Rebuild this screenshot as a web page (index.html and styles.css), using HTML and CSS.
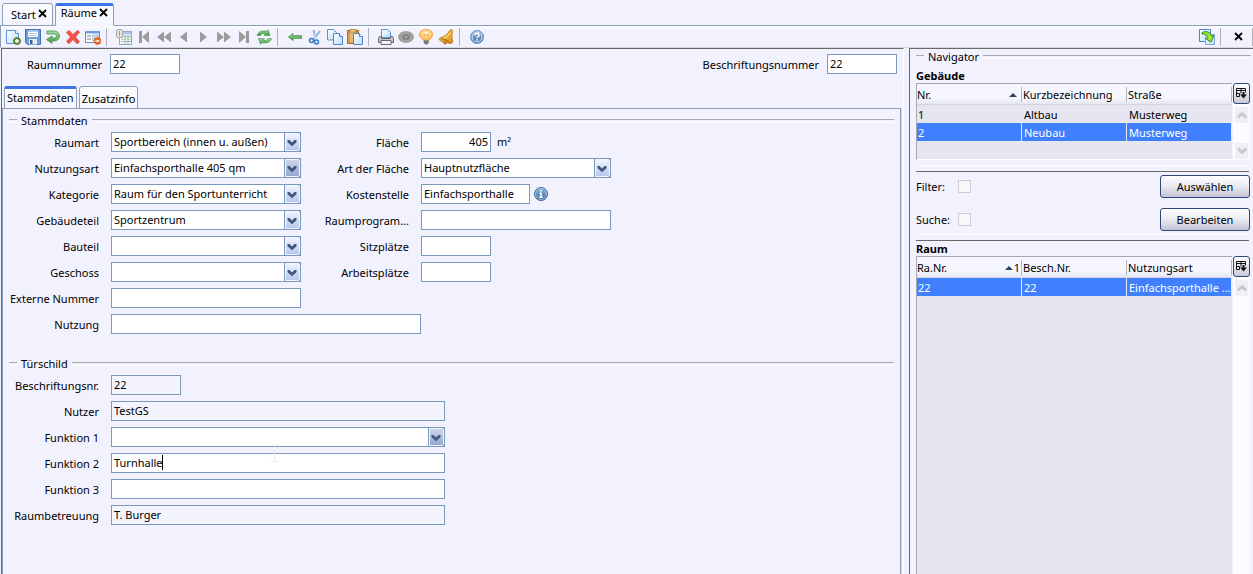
FILE: index.html
```html
<!DOCTYPE html>
<html lang="de">
<head>
<meta charset="utf-8">
<title>Räume</title>
<link rel="stylesheet" href="styles.css">
</head>
<body>
<svg class="defs" aria-hidden="true">
  <defs>
    <linearGradient id="blueSheet" x1="0" y1="0" x2="1" y2="1"><stop offset="0" stop-color="#ffffff"/><stop offset="1" stop-color="#b9dcf8"/></linearGradient>
    <linearGradient id="green" x1="0" y1="0" x2="0" y2="1"><stop offset="0" stop-color="#a5dca0"/><stop offset="1" stop-color="#3c9a3c"/></linearGradient>
    <linearGradient id="gold" x1="0" y1="0" x2="1" y2="1"><stop offset="0" stop-color="#ffe27a"/><stop offset="1" stop-color="#d98a10"/></linearGradient>
    <linearGradient id="orb" x1="0" y1="0" x2="0" y2="1"><stop offset="0" stop-color="#8db4dc"/><stop offset="1" stop-color="#3c6ea8"/></linearGradient>
    <radialGradient id="bulb" cx=".5" cy=".4" r=".6"><stop offset="0" stop-color="#fffbe0"/><stop offset="1" stop-color="#fbb040"/></radialGradient>
    <symbol id="chevron" viewBox="0 0 10 8"><path d="M.5 1v2.200L5 7.200l4.500-4V1H7.500L5 3.500 2.500 1z" fill="#41597f"/></symbol>
    <symbol id="columns" viewBox="0 0 11 11"><path d="M3.500 8.500h-3v-8h9v4M.5 2.500h9M3.500 5.500h-3M5 .5v5M3.500 5.500v3" fill="none" stroke="#111"/><path d="M4 6.500h7L7.500 10.500z" fill="#111"/><path d="M6.500 4h2v3h-2z" fill="#111"/></symbol>
    <symbol id="close" viewBox="0 0 9 9"><path d="M1 1l7 7M8 1L1 8" stroke="#000" stroke-width="1.800" fill="none"/></symbol>
  </defs>
</svg>
<div class="app">
  <nav class="tabs main-tabs">
    <div class="tab">Start<button class="tab-close" aria-label="Start schließen"><svg width="9" height="9"><use href="#close"/></svg></button></div>
    <div class="tab active">Räume<button class="tab-close" aria-label="Räume schließen"><svg width="9" height="9"><use href="#close"/></svg></button></div>
  </nav>

  <div class="toolbar">
    <button class="tool" aria-label="Neu"><svg viewBox="0 0 16 16"><path d="M1.500 1.500h9l3 3v10h-12z" fill="url(#blueSheet)" stroke="#5b93d6"/><path d="M10.500 1.500v3h3" fill="#fff" stroke="#5b93d6"/><circle cx="12" cy="12" r="3.500" fill="#6b9a3f" stroke="#4a7a2a"/><path d="M12 10v4M10 12h4" stroke="#fff" stroke-width="1.300"/></svg></button>
    <button class="tool" aria-label="Speichern"><svg viewBox="0 0 16 16"><path d="M.5 .5h15v15h-13l-2-2z" fill="#6c9cdc" stroke="#4272b4"/><path d="M3 1h10v7H3z" fill="#fff"/><path d="M3 1h10v2H3z" fill="#a5ccf3"/><path d="M4 4.500h8M4 6.500h8" stroke="#b9c8d8"/><path d="M4 10h8v5.500H4z" fill="#e8edf3"/><path d="M5 11h2.500v4H5z" fill="#3e6292"/></svg></button>
    <button class="tool" aria-label="Rückgängig"><svg viewBox="0 0 16 16"><path d="M2 2h7.500a5 5 0 0 1 0 10H7v2.500L1.500 10.500 7 7v2h2.500a2 2 0 0 0 0-4H2z" fill="url(#green)" stroke="#4d9450" stroke-width=".8"/></svg></button>
    <button class="tool" aria-label="Löschen"><svg viewBox="0 0 16 16"><path d="M1.500 3.500L4 1.500 8 5.500 12.500 1.500 14.500 3 10.500 8 14.500 13 12 14.800 8 10.500 4 14.800 1.500 12.500 5.500 8z" fill="#f45348" stroke="#de3b35" stroke-width=".7"/></svg></button>
    <button class="tool" aria-label="Formular schließen"><svg viewBox="0 0 16 16"><path d="M.5 2.500h14v11H.5z" fill="#fff" stroke="#6389bc"/><path d="M1 2h13v2.500H1z" fill="#6fa0dc"/><path d="M2 7h4M2 10h4" stroke="#777" stroke-width="1.200"/><path d="M7.500 6h6v2h-6zM7.500 9.500h3v2h-3z" fill="#dce8f5" stroke="#8ba6c4" stroke-width=".7"/><circle cx="12.500" cy="12" r="3.400" fill="#ee6a20" stroke="#c84d10" stroke-width=".6"/><path d="M10.500 12h4" stroke="#fff" stroke-width="1.400"/></svg></button>
    <span class="sep"></span>
    <button class="tool" aria-label="Tabelle"><svg viewBox="0 0 16 16"><path d="M3.500 2.500h12v13h-12z" fill="#f4f8fc" stroke="#8aa9cc"/><path d="M4 3h11v2.500H4z" fill="#a9c7e8"/><path d="M5 7.500h10M5 10h10M5 12.500h10M9 6v9M12 6v9" stroke="#93b39d" stroke-width=".8"/><rect x=".5" y=".5" width="6" height="8" rx="1.500" fill="#e4e4e4" stroke="#aaa"/><path d="M3.500 2v5" stroke="#999"/></svg></button>
    <button class="tool gray" aria-label="Erster"><svg viewBox="0 0 16 16"><path d="M3 2h3v12H3zM13 2v12L6 8z"/></svg></button>
    <button class="tool gray" aria-label="Zurück blättern"><svg viewBox="0 0 16 16"><path d="M8 2.500v11L1 8zM15 2.500v11L8 8z"/></svg></button>
    <button class="tool gray" aria-label="Voriger"><svg viewBox="0 0 16 16"><path d="M11 2.500v11L4 8z"/></svg></button>
    <button class="tool gray" aria-label="Nächster"><svg viewBox="0 0 16 16"><path d="M4 2.500v11L11 8z"/></svg></button>
    <button class="tool gray" aria-label="Vor blättern"><svg viewBox="0 0 16 16"><path d="M1 2.500v11L8 8zM8 2.500v11L15 8z"/></svg></button>
    <button class="tool gray" aria-label="Letzter"><svg viewBox="0 0 16 16"><path d="M10 2h3v12h-3zM3 2v12l7-6z"/></svg></button>
    <button class="tool" aria-label="Aktualisieren"><svg viewBox="0 0 16 16"><path d="M1 6.500C2 3 6 1 10.500 2.500L12 .8l2 5.700-6-.2 1.500-1.500C7 4 5 4.500 4.500 6.500z" fill="url(#green)" stroke="#4a944c" stroke-width=".7"/><path d="M15.500 9.500c-1 3.500-5 5.500-9.500 4L4.500 15.200l-2-5.700 6 .2L7 11.200c2.500.8 4.500.3 5-1.700z" fill="url(#green)" stroke="#4a944c" stroke-width=".7"/></svg></button>
    <span class="sep"></span>
    <button class="tool" aria-label="Zurück"><svg viewBox="0 0 16 16"><path d="M1.500 8L6 4.500v2.200h8.500v2.600H6v2.200z" fill="url(#green)" stroke="#4a9450" stroke-width=".9"/></svg></button>
    <button class="tool" aria-label="Ausschneiden"><svg viewBox="0 0 16 16"><path d="M6.500 1L8.500 10M13 2L6.500 10.500" stroke="#8bb5de" stroke-width="2"/><path d="M7.500 5l1 5" stroke="#d7e8f8"/><circle cx="4.500" cy="11.500" r="2" fill="none" stroke="#3f7dc2" stroke-width="1.600"/><circle cx="9.500" cy="13" r="2" fill="none" stroke="#3f7dc2" stroke-width="1.600"/></svg></button>
    <button class="tool" aria-label="Kopieren"><svg viewBox="0 0 16 16"><path d="M.5.5h6l3 3v7.500h-9z" fill="url(#blueSheet)" stroke="#5b93d6"/><path d="M6.500 4.500h6l3 3v8h-9z" fill="url(#blueSheet)" stroke="#4c84cc"/><path d="M12.500 4.500v3h3" fill="#fff" stroke="#4c84cc"/></svg></button>
    <button class="tool" aria-label="Einfügen"><svg viewBox="0 0 16 16"><path d="M.5 1.500h11v13H.5z" fill="#d69a50" stroke="#a86a24"/><path d="M3 3h6v10H3z" fill="#e9b878"/><rect x="3" y=".5" width="6" height="2.500" fill="#f4d777" stroke="#99762a" stroke-width=".7"/><path d="M6.500 4.500h6l3 3v8h-9z" fill="url(#blueSheet)" stroke="#4c84cc"/><path d="M12.500 4.500v3h3" fill="#fff" stroke="#4c84cc"/></svg></button>
    <span class="sep"></span>
    <button class="tool" aria-label="Drucken"><svg viewBox="0 0 16 16"><path d="M3.500.5h6l3 3v5h-9z" fill="url(#blueSheet)" stroke="#5b93d6"/><path d="M1.500 7.500h2v2h9v-2h2l1 2v4H.5v-4z" fill="#c9c9cc" stroke="#66676b"/><path d="M3 11.500h10v4H3z" fill="#f6f6f8" stroke="#66676b"/></svg></button>
    <button class="tool" aria-label="Vorschau"><svg viewBox="0 0 16 16"><ellipse cx="8" cy="8" rx="8" ry="6" fill="#a3a3a3"/><ellipse cx="8" cy="8" rx="4" ry="3" fill="#858585"/><circle cx="8" cy="8" r="1.300" fill="#a9a9a9"/></svg></button>
    <button class="tool" aria-label="Hinweis"><svg viewBox="0 0 16 16"><path d="M8 .5c4 0 6.500 2.300 6.500 5.200 0 2.600-2.500 3.800-3.500 5.800H5.500C4.500 9.500 1.500 8.300 1.500 5.700 1.500 2.800 4 .5 8 .5z" fill="url(#bulb)" stroke="#eda43c"/><path d="M6 8V5l2 1.500L10 5v3" fill="none" stroke="#eda43c"/><path d="M5.800 11.500h5v2.500l-1.500 1.500H7.200L5.800 14z" fill="#737b82"/></svg></button>
    <button class="tool" aria-label="Erinnerung"><svg viewBox="0 0 16 16"><path d="M12 1.200L14 .8l.5 1.700c-.8 3-.9 6.500.1 9.500.3 1.500-.8 2.700-2.300 2.500L2.500 11.800c-1.500-.6-1.700-2.300-.3-2.900C6 7.800 9.500 5.500 12 1.200z" fill="url(#gold)" stroke="#c58114"/><path d="M2.500 10.200c3-.8 7 .5 9.800 3.800" fill="none" stroke="#9c620c"/><path d="M11.500 4.500C10 7 8 8.500 6 9.300" fill="none" stroke="#fff0a8"/><circle cx="7" cy="13.500" r="1.700" fill="#d28b1c" stroke="#a56a10" stroke-width=".6"/></svg></button>
    <span class="sep"></span>
    <button class="tool" aria-label="Hilfe"><svg viewBox="0 0 16 16"><circle cx="8" cy="8" r="6.500" fill="url(#orb)" stroke="#6c96c6"/><circle cx="8" cy="8" r="5" fill="none" stroke="#dbe9f7"/><path d="M6 6.500c0-2.800 4-2.500 4-.3C10 7.800 8 7.700 8 9.300M8 10.300v1.500" fill="none" stroke="#fff" stroke-width="1.500"/></svg></button>
    <div class="toolbar-end">
      <button class="tool" aria-label="Navigator ablösen"><svg viewBox="0 0 16 16"><path d="M.5.500h11v12H.5z" fill="url(#blueSheet)" stroke="#4c84cc"/><path d="M6.500 5.500h9v10h-9z" fill="url(#blueSheet)" stroke="#7eace0"/><path d="M3 3.500c4-2 8.500-.5 9.500 3.500l2.500-.5-3 6.500-5.500-3.500 2.500-.7C8.500 6.500 6.500 4.500 3 5z" fill="#a5e62c" stroke="#27883a"/></svg></button>
      <span class="sep"></span>
      <button class="tool" aria-label="Schließen"><svg class="small" viewBox="0 0 9 9"><use href="#close"/></svg></button>
      <span class="sep last"></span>
    </div>
  </div>

  <div class="body">
    <main class="editor">
      <div class="head">
        <div class="pair"><label for="raumnr">Raumnummer</label><input class="w-s" id="raumnr" value="22"></div>
        <div class="pair"><label for="beschnr">Beschriftungsnummer</label><input class="w-s" id="beschnr" value="22"></div>
      </div>
      <div class="tabs sub-tabs">
        <button class="tab active">Stammdaten</button>
        <button class="tab">Zusatzinfo</button>
      </div>
      <div class="panel">
        <h2 class="rule">Stammdaten</h2>
        <div class="form">
          <label for="raumart">Raumart</label>
          <div class="combo w-m"><select id="raumart"><option>Sportbereich (innen u. außen)</option></select><span class="arrow"><svg><use href="#chevron"/></svg></span></div>
          <label for="flaeche">Fläche</label>
          <div class="pair"><input class="w-s num" id="flaeche" value="405"><span class="unit">m²</span></div>

          <label for="nutzungsart">Nutzungsart</label>
          <div class="combo w-m"><select id="nutzungsart"><option>Einfachsporthalle 405 qm</option></select><span class="arrow dark"><svg><use href="#chevron"/></svg></span></div>
          <label for="artfl">Art der Fläche</label>
          <div class="combo w-m"><select id="artfl"><option>Hauptnutzfläche</option></select><span class="arrow"><svg><use href="#chevron"/></svg></span></div>

          <label for="kategorie">Kategorie</label>
          <div class="combo w-m"><select id="kategorie"><option>Raum für den Sportunterricht</option></select><span class="arrow"><svg><use href="#chevron"/></svg></span></div>
          <label for="kosten">Kostenstelle</label>
          <div class="pair"><input class="w-k" id="kosten" value="Einfachsporthalle"><button class="info" aria-label="Info"><svg viewBox="0 0 16 16"><circle cx="8" cy="8" r="6.500" fill="url(#orb)" stroke="#41699b"/><circle cx="8" cy="8" r="5.500" fill="none" stroke="#a8c6e6" stroke-width=".8"/><path d="M8 4v1.700M6.500 7.200H8v4M6.300 11.300h3.500" fill="none" stroke="#fff" stroke-width="1.500"/></svg></button></div>

          <label for="gebteil">Gebäudeteil</label>
          <div class="combo w-m"><select id="gebteil"><option>Sportzentrum</option></select><span class="arrow"><svg><use href="#chevron"/></svg></span></div>
          <label for="rprog">Raumprogram...</label>
          <input class="w-m" id="rprog">

          <label for="bauteil">Bauteil</label>
          <div class="combo w-m"><select id="bauteil"><option></option></select><span class="arrow"><svg><use href="#chevron"/></svg></span></div>
          <label for="sitz">Sitzplätze</label>
          <input class="w-s" id="sitz">

          <label for="geschoss">Geschoss</label>
          <div class="combo w-m"><select id="geschoss"><option></option></select><span class="arrow"><svg><use href="#chevron"/></svg></span></div>
          <label for="arbeit">Arbeitsplätze</label>
          <input class="w-s" id="arbeit">

          <label for="extern">Externe Nummer</label>
          <input class="w-m span" id="extern">

          <label for="nutzung">Nutzung</label>
          <input class="w-l span" id="nutzung">
        </div>

        <h2 class="rule second">Türschild</h2>
        <div class="form">
          <label for="tnr">Beschriftungsnr.</label>
          <input class="w-s span" id="tnr" value="22" readonly>
          <label for="nutzer">Nutzer</label>
          <input class="w-xl span" id="nutzer" value="TestGS" readonly>
          <label for="f1">Funktion 1</label>
          <div class="combo w-xl span"><select id="f1"><option></option></select><span class="arrow dark"><svg><use href="#chevron"/></svg></span><svg class="pointer" viewBox="0 0 7 17"><path d="M0 .5h3M4 .5h3M3.500 1v15M0 16.500h7" stroke="#ececf2" fill="none"/></svg></div>
          <label for="f2">Funktion 2</label>
          <div class="combo w-xl span"><input id="f2" value="Turnhalle"><span class="caret"></span></div>
          <label for="f3">Funktion 3</label>
          <input class="w-xl span" id="f3">
          <label for="betr">Raumbetreuung</label>
          <input class="w-xl span" id="betr" value="T. Burger" readonly>
        </div>
      </div>
    </main>

    <aside class="navigator">
      <h2 class="rule">Navigator</h2>
      <h3>Gebäude</h3>
      <div class="list short">
        <div class="cells">
          <table>
            <thead><tr><th><div class="th">Nr.<span class="sort"></span></div></th><th><div class="th">Kurzbezeichnung</div></th><th><div class="th">Straße</div></th></tr></thead>
            <tbody>
              <tr><td>1</td><td>Altbau</td><td>Musterweg</td></tr>
              <tr class="selected"><td>2</td><td>Neubau</td><td>Musterweg</td></tr>
            </tbody>
          </table>
        </div>
        <div class="side">
          <button class="colbtn" aria-label="Spalten"><svg><use href="#columns"/></svg></button>
          <div class="scroll"><span class="sb up"><svg><use href="#chevron"/></svg></span><span class="sb"><svg><use href="#chevron"/></svg></span></div>
        </div>
      </div>
      <div class="split"></div>
      <div class="action"><label for="filter">Filter:</label><input type="checkbox" id="filter"><button class="btn">Auswählen</button></div>
      <div class="action"><label for="suche">Suche:</label><input type="checkbox" id="suche"><button class="btn">Bearbeiten</button></div>
      <div class="split tight"></div>
      <h3>Raum</h3>
      <div class="list fill">
        <div class="cells">
          <table>
            <thead><tr><th><div class="th">Ra.Nr.<span class="sort">1</span></div></th><th><div class="th">Besch.Nr.</div></th><th><div class="th">Nutzungsart</div></th></tr></thead>
            <tbody><tr class="selected"><td>22</td><td>22</td><td>Einfachsporthalle ...</td></tr></tbody>
          </table>
        </div>
        <div class="side">
          <button class="colbtn" aria-label="Spalten"><svg><use href="#columns"/></svg></button>
          <div class="scroll"><span class="sb up"><svg><use href="#chevron"/></svg></span></div>
        </div>
      </div>
    </aside>
  </div>
</div>
</body>
</html>
```
FILE: styles.css
```css
* { box-sizing: border-box; }
body {
  margin: 0;
  background: #f2f2ff;
  color: #000;
  font: 11px/16px "Noto Sans", "Open Sans", sans-serif;
}
button, input, select { font: inherit; color: inherit; margin: 0; }
button { padding: 0; border: 0; background: none; }
svg { display: block; }
h2, h3 { margin: 0; font-size: inherit; }
.defs { position: absolute; width: 0; height: 0; }
.app { display: flex; flex-direction: column; min-height: 100vh; }

/* Tabs */
.tabs { display: flex; gap: 2px; padding-left: 2px; }
.tab {
  display: flex;
  align-items: center;
  gap: 2px;
  height: 23px;
  border: 1px solid #8ca0b8;
  border-radius: 3px 3px 0 0;
  background: linear-gradient(#fdfdff, #f4f4fe);
}
.tab.active { border-top: 3px solid #3d73e6; border-bottom-color: #f2f2ff; }
.main-tabs { padding-top: 3px; box-shadow: inset 0 -1px #8ca0b8; }
.main-tabs .tab { padding: 0 5px 0 8px; }
.main-tabs .active { padding: 0 5px 5px; }
.tab-close { padding-bottom: 2px; }
.sub-tabs { margin-bottom: -1px; }
.sub-tabs .tab { padding: 2px 2px 0; }
.sub-tabs .active { padding: 0 2px 1px; }

/* Toolbar */
.toolbar {
  display: flex;
  align-items: center;
  height: 22px;
  padding-left: 2px;
  border-left: 1px solid #8ca0b8;
  border-bottom: 1px solid #d8d8e4;
  background: linear-gradient(#fbfbff, #f2f2ff 4px);
}
.tool { width: 20px; padding: 0 2px; }
.tool svg { width: 16px; height: 16px; }
.tool .small { width: 9px; height: 9px; margin: 0 auto; }
.gray { fill: #9b9b9b; }
.sep { width: 1px; height: 18px; margin: 0 7px 0 3px; background: #b0b0b8; }
.toolbar-end { display: flex; align-items: center; margin-left: auto; }
.sep.last { margin: 0 0 0 4px; }

/* Body */
.body { display: flex; flex: 1; gap: 5px; }
.editor {
  display: flex;
  flex: 1;
  flex-direction: column;
  min-width: 0;
  border-top: 1px solid #696969;
  border-left: 1px solid #696969;
  border-right: 1px solid #fff;
  margin-left: 1px;
}
.head { display: flex; justify-content: space-between; padding: 5px 6px 12px 25px; }
.pair { display: flex; align-items: center; }
.head label { padding: 2px 8px 0 0; }
.panel {
  flex: 1;
  margin-right: 2px;
  padding: 4px 6px 24px;
  border: solid #8ca0b8;
  border-width: 1px 1px 0;
  box-shadow: 1px 0 #d4d8e4;
}
.rule {
  display: flex;
  align-items: center;
  gap: 4px;
  height: 16px;
  font-weight: normal;
}
.rule::before, .rule::after { content: ""; height: 2px; border-top: 1px solid #a8a8b0; border-bottom: 1px solid #fff; }
.rule::before { width: 8px; }
.rule::after { flex: 1; }
.rule.second { margin: 22px 0 0; }

.form {
  display: grid;
  grid-template-columns: 90px 190px 96px 1fr;
  grid-auto-rows: 20px;
  gap: 6px 12px;
  padding-top: 3px;
}
.form > label { text-align: right; padding-top: 3px; white-space: nowrap; }
.span { grid-column: 2 / -1; }
.w-s { width: 70px; }
.w-k { width: 109px; }
.w-m { width: 190px; }
.w-l { width: 310px; }
.w-xl { width: 334px; }
input, select {
  height: 20px;
  padding: 0 2px 1px;
  border: 1px solid #7b98bd;
  border-radius: 0;
  background: #fff;
  outline: 0;
}
input[readonly] { background: #f4f4fd; }
.num { text-align: right; }
.unit { padding-left: 6px; }
.info { padding-left: 3px; }
.info svg { width: 16px; height: 16px; }

.combo { position: relative; }
.combo select, .combo input { display: block; width: 100%; appearance: none; }
.arrow {
  position: absolute;
  top: 0;
  right: 0;
  display: grid;
  place-items: center start;
  width: 17px;
  height: 20px;
  padding: 1px 0 0 2px;
  border: 1px solid #7b98bd;
  border-radius: 0 3px 3px 0;
  background: linear-gradient(#f4f6fe, #b4c4ec);
  box-shadow: inset 0 0 0 1px #f0f4ff;
  pointer-events: none;
}
.arrow.dark { background: linear-gradient(#d2d9ec, #93a5cd); }
.arrow svg { width: 10px; height: 8px; }
.caret { position: absolute; top: 2px; left: 51px; width: 1px; height: 15px; background: #000; }
.pointer { position: absolute; top: 18px; left: 160px; width: 7px; height: 17px; z-index: 1; }

/* Navigator */
.navigator {
  display: flex;
  flex: 0 0 344px;
  flex-direction: column;
  padding: 0 2px 0 6px;
  border-top: 1px solid #696969;
  border-left: 1px solid #696969;
}
.navigator .rule { margin-bottom: 3px; }
h3 { height: 15px; line-height: 16px; }
.list { display: flex; }
.short { height: 77px; }
.fill { flex: 1; }
.cells { flex: 1; border: 1px solid #a8a8b0; border-width: 1px 0 0 1px; background: #e6e6f0; }
.short .cells { border-bottom: 1px solid #fff; }
table { width: 100%; border-collapse: separate; border-spacing: 0; table-layout: fixed; }
th {
  height: 21px;
  padding: 1px 0 0;
  border-bottom: 1px solid #d4d4de;
  background: linear-gradient(#f6f6ff 14px, #e6e6f0);
  font-weight: normal;
}
th + th { padding-left: 1px; }
.th { display: flex; justify-content: space-between; align-items: center; height: 15px; border-right: 1px solid #b4b4bc; }
.sort { display: flex; align-items: center; padding-right: 3px; }
.sort:not(:empty) { padding-right: 1px; }
.sort::before { content: ""; margin-right: 1px; border: 4px solid transparent; border-top: 0; border-bottom-color: #2d4467; }
td { height: 18px; padding: 0 0 0 2px; line-height: 17px; white-space: nowrap; overflow: hidden; }
td:first-child { padding-left: 1px; }
.selected td { background: #4080ff; color: #fff; border-right: 1px solid #e6e6f0; }
.side { display: flex; flex-direction: column; width: 19px; padding: 0 1px; }
.colbtn {
  display: grid;
  place-items: center;
  width: 17px;
  height: 21px;
  border: 1px solid #294a7a;
  border-radius: 3px;
  background: linear-gradient(#fff, #cacad8);
}
.colbtn svg { width: 11px; height: 11px; }
.scroll { display: flex; flex: 1; flex-direction: column; justify-content: space-between; padding-top: 2px; background: #fcfcfe; }
.sb { display: grid; place-items: center; height: 16px; margin: 1px 2px; background: #f0f0f2; }
.sb svg { width: 10px; height: 8px; opacity: .25; }
.up svg { transform: rotate(180deg); }
.split { height: 7px; margin: 5px 2px 3px 0; border-top: 1px solid #fff; border-bottom: 1px solid #696969; }
.split.tight { margin: -7px 2px 0 0; }
.action { display: flex; align-items: flex-start; height: 33px; padding-right: 1px; }
.action label { width: 42px; padding-top: 4px; }
.action input { appearance: none; width: 13px; height: 13px; margin-top: 5px; padding: 0; border: 1px solid #ccccd6; background: #f8f8fa; }
.btn {
  width: 90px;
  height: 23px;
  margin-left: auto;
  border: 1px solid #294a7a;
  border-radius: 3px;
  background: linear-gradient(#fff, #e9e9f3 50%, #c4c4d2);
}
```
